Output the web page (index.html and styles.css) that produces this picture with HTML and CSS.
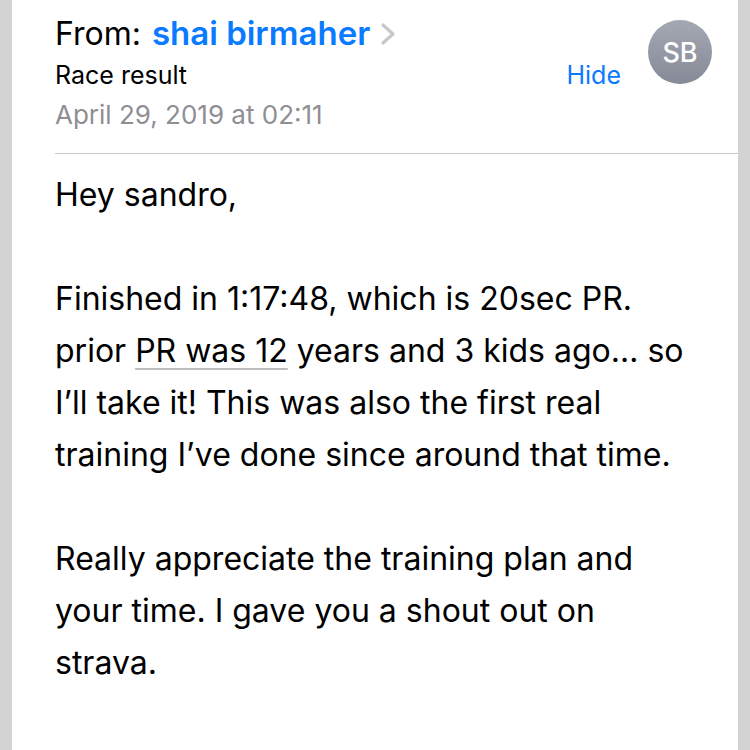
FILE: index.html
```html
<!DOCTYPE html>
<html>
<head>
<meta charset="utf-8">
<link rel="stylesheet" href="styles.css">
</head>
<body>
<div class="page">
  <div class="header">
    <div class="meta">
      <div class="from-row">
        <span class="from-label">From:</span>
        <span class="sender">shai birmaher</span>
        <svg class="chevron" width="16" height="24" viewBox="0 0 16 24"><path d="M3 3 L13 12 L3 21" fill="none" stroke="#c7c7cc" stroke-width="3.2" stroke-linecap="round" stroke-linejoin="round"/></svg>
      </div>
      <div class="subject-row">
        <span class="subject">Race result</span>
        <span class="hide">Hide</span>
      </div>
      <div class="date">April 29, 2019 at 02:11</div>
    </div>
    <div class="avatar">SB</div>
  </div>
  <div class="divider"></div>
  <div class="body">
    <p>Hey sandro,</p>
    <p>Finished in 1:17:48, which is 20sec PR.<br>prior <span class="detect">PR was 12</span> years and 3 kids ago… so<br>I’ll take it! This was also the first real<br>training I’ve done since around that time.</p>
    <p>Really appreciate the training plan and<br>your time. I gave you a shout out on<br>strava.</p>
  </div>
</div>
</body>
</html>
```

FILE: styles.css
```css
html, body {
  margin: 0;
  padding: 0;
  background: #d2d2d2;
}
body {
  font-family: Inter, "Noto Sans", sans-serif;
  color: #000;
}
.page {
  margin: 0 12px;
  background: #fff;
  height: 750px;
  overflow: hidden;
}
.header {
  display: flex;
  align-items: flex-start;
  padding: 0 26px 0 43px;
}
.meta {
  flex: 1;
}
.from-row {
  display: flex;
  align-items: center;
  height: 44px;
  padding-top: 11px;
  font-size: 32px;
}
.from-label {
  margin-right: 11px;
}
.sender {
  color: #0a7aff;
  font-weight: 600;
  font-size: 33px;
}
.chevron {
  margin-left: 10px;
  margin-top: 2px;
}
.subject-row {
  display: flex;
  justify-content: space-between;
  align-items: baseline;
  font-size: 25px;
  line-height: 40px;
}
.hide {
  color: #0a7aff;
}
.date {
  font-size: 26px;
  line-height: 40px;
  color: #8e8e93;
}
.avatar {
  width: 64px;
  height: 64px;
  border-radius: 50%;
  margin-top: 20px;
  margin-left: 27px;
  background: linear-gradient(#a4a8b3, #868a96);
  color: #fff;
  font-size: 27px;
  font-weight: 500;
  display: flex;
  align-items: center;
  justify-content: center;
}
.divider {
  height: 1px;
  background: #c8c7cc;
  margin: 18px 0 0 43px;
}
.body {
  padding: 15px 0 0 43px;
  font-size: 32px;
  line-height: 52px;
}
.body p {
  margin: 0 0 52px 0;
}
.detect {
  text-decoration: underline;
  text-decoration-color: #bdbdbd;
  text-decoration-thickness: 2px;
  text-underline-offset: 6px;
}
```
